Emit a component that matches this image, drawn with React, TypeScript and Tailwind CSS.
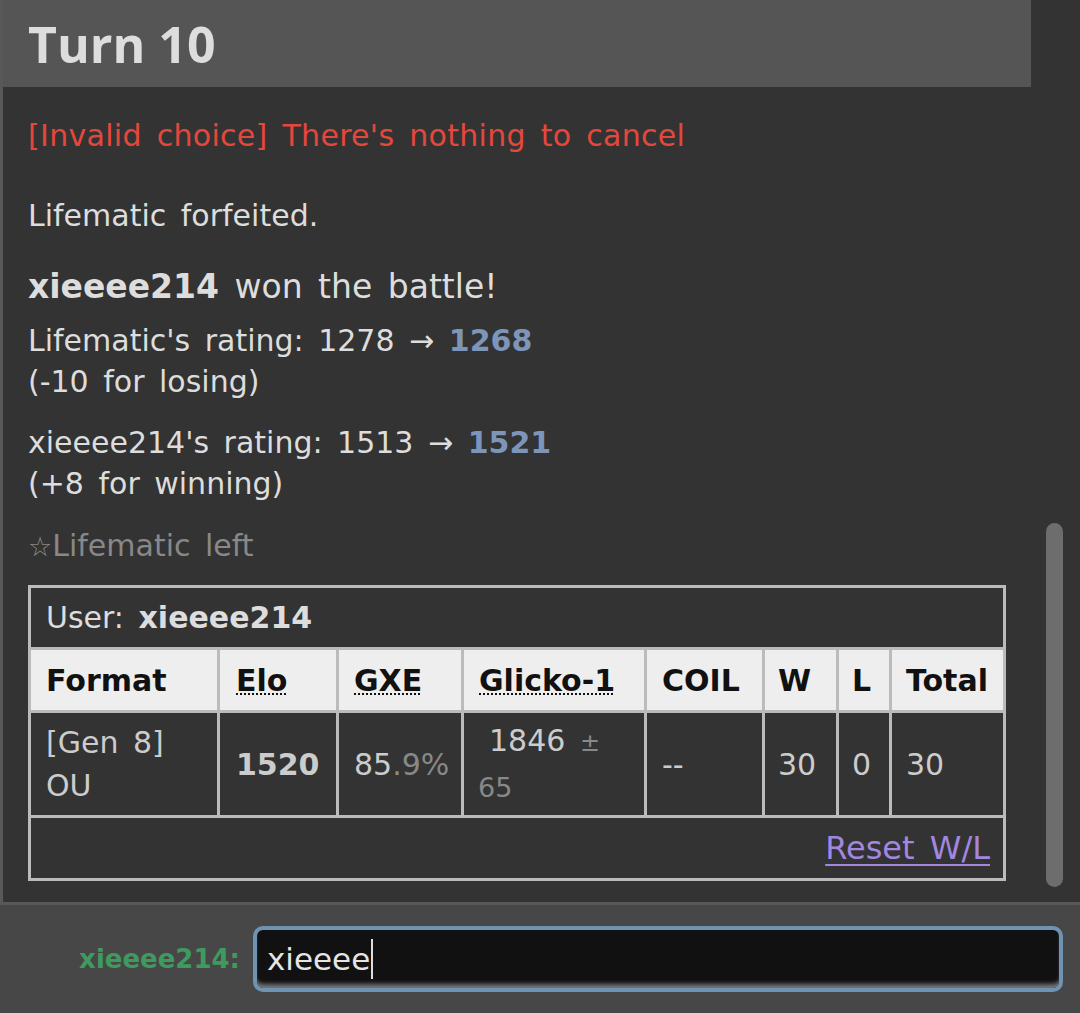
export default function App() {
  return (
    <div className="w-[1080px] h-[1013px] bg-[#333] flex flex-col overflow-hidden font-['DejaVu_Sans',sans-serif] text-[#ddd] [word-spacing:5px]">
      <div className="relative h-[902px] border-l-[3px] border-[#585858] flex flex-col">
        <div className="w-[1028px] h-[87px] bg-[#555] pl-[25px] flex items-center">
          <span className="font-['Open_Sans',sans-serif] text-[50px] font-bold text-[#ddd] leading-none [word-spacing:0px]">Turn 10</span>
        </div>
        <div className="pl-[25px] flex flex-col">
          <div className="mt-[28px] text-[30px] leading-[41px] text-[#e4473b] tracking-[0.3px]">[Invalid choice] There's nothing to cancel</div>
          <div className="mt-[39px] text-[30px] leading-[41px]">Lifematic forfeited.</div>
          <div className="mt-[30px] text-[33px] leading-[41px]"><b>xieeee214</b> won the battle!</div>
          <div className="mt-[13px] text-[30px] leading-[41px]">
            Lifematic's rating: 1278 <span className="[word-spacing:0px]">→</span> <b className="text-[#7e95ba]">1268</b>
            <br />(-10 for losing)
          </div>
          <div className="mt-[20px] text-[30px] leading-[41px]">
            xieeee214's rating: 1513 → <b className="text-[#7e95ba]">1521</b>
            <br />(+8 for winning)
          </div>
          <div className="mt-[21px] text-[30px] leading-[41px] text-[#888]"><span className="text-[27px]">☆</span>Lifematic left</div>
          <div className="mt-[18px] w-[978px] border-[3px] border-[#bbb] bg-[#bbb] flex flex-col gap-[3px] text-[30px]">
            <div className="h-[59px] bg-[#333] px-[15px] flex items-center">
              <span>User: <b>xieeee214</b></span>
            </div>
            <div className="grid grid-cols-[186px_116px_122px_180px_115px_71px_50px_111px] gap-[3px]">
              <div className="h-[60px] bg-[#eee] text-[#111] font-bold pl-[15px] flex items-center">Format</div>
              <div className="h-[60px] bg-[#eee] text-[#111] font-bold pl-[16px] flex items-center"><span className="underline decoration-dotted decoration-2 underline-offset-[3px]">Elo</span></div>
              <div className="h-[60px] bg-[#eee] text-[#111] font-bold pl-[15px] flex items-center"><span className="underline decoration-dotted decoration-2 underline-offset-[3px]">GXE</span></div>
              <div className="h-[60px] bg-[#eee] text-[#111] font-bold pl-[15px] flex items-center"><span className="underline decoration-dotted decoration-2 underline-offset-[3px]">Glicko-1</span></div>
              <div className="h-[60px] bg-[#eee] text-[#111] font-bold pl-[15px] flex items-center">COIL</div>
              <div className="h-[60px] bg-[#eee] text-[#111] font-bold pl-[13px] flex items-center">W</div>
              <div className="h-[60px] bg-[#eee] text-[#111] font-bold pl-[13px] flex items-center">L</div>
              <div className="h-[60px] bg-[#eee] text-[#111] font-bold pl-[14px] flex items-center">Total</div>

              <div className="h-[102px] bg-[#333] pl-[15px] flex items-center leading-[43px] text-[#ccc]">[Gen 8]<br />OU</div>
              <div className="h-[102px] bg-[#333] pl-[16px] flex items-center font-bold text-[#ccc]">1520</div>
              <div className="h-[102px] bg-[#333] pl-[15px] flex items-center text-[#ccc]">85<span className="text-[#888]">.9%</span></div>
              <div className="h-[102px] bg-[#333] pl-[14px] flex items-center leading-[43px] text-[#ccc]">
                <span><span className="ml-[11px]">1846</span> <span className="text-[24px] text-[#888]">±</span><br /><span className="text-[27px] text-[#888]">65</span></span>
              </div>
              <div className="h-[102px] bg-[#333] pl-[15px] flex items-center text-[#ccc]">--</div>
              <div className="h-[102px] bg-[#333] pl-[13px] flex items-center text-[#ccc]">30</div>
              <div className="h-[102px] bg-[#333] pl-[13px] flex items-center text-[#ccc]">0</div>
              <div className="h-[102px] bg-[#333] pl-[14px] flex items-center text-[#ccc]">30</div>
            </div>
            <div className="h-[60px] bg-[#333] pr-[13px] flex items-center justify-end">
              <span className="text-[32px] text-[#a187e0] underline underline-offset-[5px] decoration-2">Reset W/L</span>
            </div>
          </div>
        </div>
        <div className="absolute left-[1043px] top-[523px] w-[17px] h-[364px] rounded-full bg-[#6d6d6d]" />
      </div>
      <div className="flex-1 border-t-[3px] border-[#595959] bg-[#474747] flex items-center">
        <div className="w-[240px] text-right text-[26px] font-bold text-[#3e9a5e]">xieeee214:</div>
        <div className="ml-[13px] w-[810px] h-[66px] rounded-[10px] border-[4px] border-[#6e93b3] bg-[#111] shadow-[inset_0_-6px_4px_-2px_#777] flex items-center pl-[10px]">
          <span className="text-[31px] text-[#e5e5e5]">xieeee</span>
          <span className="ml-[1px] w-[2px] h-[40px] bg-[#ddd]" />
        </div>
      </div>
    </div>
  );
}
